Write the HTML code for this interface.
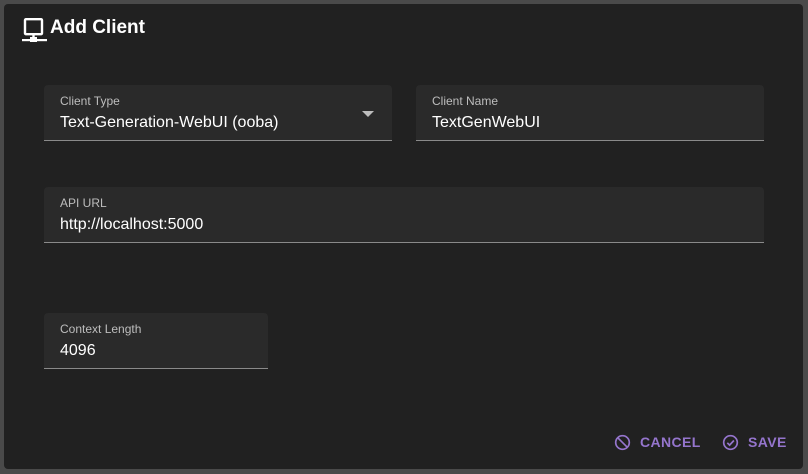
<!DOCTYPE html>
<html><head><meta charset="utf-8"><style>
html,body{margin:0;padding:0;width:808px;height:474px;background:#4a4a4a;overflow:hidden;font-family:"Liberation Sans",Roboto,sans-serif}
.dlg{position:absolute;left:4px;top:4px;width:799px;height:465px;background:#212121;border-radius:4px}
.title{position:absolute;left:50px;top:17px;color:#fff;font-size:19px;font-weight:bold}
.icon{position:absolute;left:21px;top:17px}
.f{position:absolute;background:#2a2a2a;border-radius:4px 4px 0 0;border-bottom:1px solid #8a8a8a;box-sizing:border-box}
.f .l{position:absolute;left:16px;top:9px;font-size:12px;color:#bdbdbd}
.f .v{position:absolute;left:16px;top:29px;font-size:16px;color:#fff}
.btn{position:absolute;top:434px;color:#9575cd;font-size:14px;font-weight:bold;letter-spacing:0.4px}
</style></head><body>
<div class="dlg"></div>
<svg class="icon" width="28" height="28" viewBox="0 0 28 28"><rect x="4" y="2.2" width="17" height="15" rx="1" fill="none" stroke="#fff" stroke-width="2.4"/><rect x="11.3" y="17" width="2.4" height="4" fill="#fff"/><rect x="9" y="20" width="7" height="5" fill="#fff"/><rect x="1" y="22" width="25" height="2.2" fill="#fff"/></svg>
<div class="title">Add Client</div>
<div class="f" style="left:44px;top:85px;width:348px;height:56px"><div class="l">Client Type</div><div class="v">Text-Generation-WebUI (ooba)</div>
<svg style="position:absolute;left:318px;top:26px" width="12" height="6"><path d="M0 0h12L6 6z" fill="#bdbdbd"/></svg></div>
<div class="f" style="left:416px;top:85px;width:348px;height:56px"><div class="l">Client Name</div><div class="v">TextGenWebUI</div></div>
<div class="f" style="left:44px;top:187px;width:720px;height:56px"><div class="l">API URL</div><div class="v">http://localhost:5000</div></div>
<div class="f" style="left:44px;top:313px;width:224px;height:56px"><div class="l">Context Length</div><div class="v">4096</div></div>
<svg style="position:absolute;left:614px;top:434px" width="17" height="17" viewBox="0 0 17 17"><circle cx="8.5" cy="8.5" r="6.8" fill="none" stroke="#9575cd" stroke-width="1.7"/><path d="M3.8 3.8L13.2 13.2" stroke="#9575cd" stroke-width="1.7"/></svg>
<div class="btn" style="left:640px">CANCEL</div>
<svg style="position:absolute;left:722px;top:434px" width="17" height="17" viewBox="0 0 17 17"><circle cx="8.5" cy="8.5" r="6.8" fill="none" stroke="#9575cd" stroke-width="1.7"/><path d="M5.3 8.8l2.3 2.3 4.3-4.6" fill="none" stroke="#9575cd" stroke-width="1.7"/></svg>
<div class="btn" style="left:748px">SAVE</div>
</body></html>
